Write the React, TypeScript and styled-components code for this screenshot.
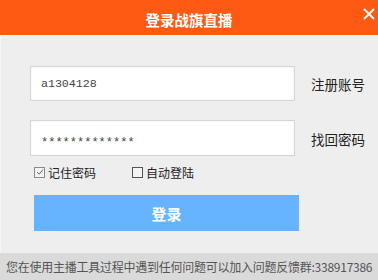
import styled, { createGlobalStyle } from "styled-components";

const GlobalStyle = createGlobalStyle`
  html, body {
    margin: 0;
    padding: 0;
    background: #eeeeee;
  }
  * {
    box-sizing: border-box;
  }
`;

const CJK = `"Noto Sans CJK SC", "Noto Sans", sans-serif`;

export default function App() {
  return (
    <>
      <GlobalStyle />
      <Frame>
        <TitleBar>
          <Title>登录战旗直播</Title>
          <CloseButton aria-label="关闭">
            <svg width="12" height="12" viewBox="0 0 12 12">
              <path d="M1 1 L11 11 M11 1 L1 11" stroke="#fff" strokeWidth="1.8" />
            </svg>
          </CloseButton>
        </TitleBar>
        <Body>
          <FieldRow>
            <Field readOnly defaultValue="a1304128" />
            <SideLink>注册账号</SideLink>
          </FieldRow>
          <FieldRow $last>
            <Field readOnly defaultValue="*************" $secret />
            <SideLink>找回密码</SideLink>
          </FieldRow>
          <Checks>
            <CheckItem>
              <Box>
                <svg width="8" height="8" viewBox="0 0 8 8">
                  <path d="M1 4 L3.2 6.2 L7 1.5" stroke="#666" strokeWidth="1" fill="none" />
                </svg>
              </Box>
              记住密码
            </CheckItem>
            <CheckItem>
              <Box $dark />
              自动登陆
            </CheckItem>
          </Checks>
          <LoginButton>登录</LoginButton>
        </Body>
        <Footer>您在使用主播工具过程中遇到任何问题可以加入问题反馈群:338917386</Footer>
      </Frame>
    </>
  );
}

const Frame = styled.div`
  width: 378px;
  height: 280px;
  display: flex;
  flex-direction: column;
  overflow: hidden;
  font-family: ${CJK};
`;

const TitleBar = styled.div`
  position: relative;
  height: 35px;
  flex: none;
  background: #ff5a14;
  display: flex;
  align-items: center;
  justify-content: center;
`;

const Title = styled.div`
  color: #fff;
  font-size: 14.5px;
  font-weight: 700;
  padding-top: 3px;
`;

const CloseButton = styled.button`
  position: absolute;
  right: 3px;
  top: 8px;
  width: 12px;
  height: 12px;
  padding: 0;
  border: 0;
  background: transparent;
  display: flex;
`;

const Body = styled.div`
  flex: 1;
  background: #eeeeee;
  border-left: 1px solid #f7f7f7;
  padding: 31px 0 0 29px;
  display: flex;
  flex-direction: column;
  align-items: flex-start;
`;

const FieldRow = styled.div<{ $last?: boolean }>`
  display: flex;
  align-items: center;
  gap: 16px;
  margin-bottom: ${(p) => (p.$last ? "9px" : "19px")};
`;

const Field = styled.input<{ $secret?: boolean }>`
  width: 265px;
  height: ${(p) => (p.$secret ? "36px" : "35px")};
  border: 1px solid #d6d6d6;
  box-shadow: inset 0 0 2px rgba(0, 0, 0, 0.08);
  background: #fff;
  padding: ${(p) => (p.$secret ? "9px 0 0 10px" : "0 0 0 10px")};
  font-family: "Liberation Mono", monospace;
  font-size: ${(p) => (p.$secret ? "12px" : "11.6px")};
  color: #444;
  outline: none;
`;

const SideLink = styled.span`
  font-size: 13.5px;
  color: #222;
  padding-top: 1px;
`;

const Checks = styled.div`
  display: flex;
  gap: 22px;
  margin-left: 4px;
  margin-bottom: 16px;
`;

const CheckItem = styled.label`
  display: flex;
  align-items: center;
  gap: 3px;
  font-size: 12px;
  color: #222;
  height: 14px;
  width: 76px;
`;

const Box = styled.span<{ $dark?: boolean }>`
  width: 11px;
  height: 11px;
  border: 1px solid ${(p) => (p.$dark ? "#555" : "#8a8a8a")};
  background: #f4f4f4;
  display: flex;
  align-items: center;
  justify-content: center;
`;

const LoginButton = styled.button`
  margin-left: 4px;
  width: 265px;
  height: 36px;
  border: 0;
  background: #66b3ff;
  color: #fff;
  font-family: ${CJK};
  font-size: 15px;
  font-weight: 700;
  padding: 0;
`;

const Footer = styled.div`
  height: 27px;
  flex: none;
  background: #dadada;
  color: #555;
  font-size: 12px;
  letter-spacing: -0.25px;
  line-height: 28px;
  padding-left: 6px;
  white-space: nowrap;
  overflow: hidden;
`;
